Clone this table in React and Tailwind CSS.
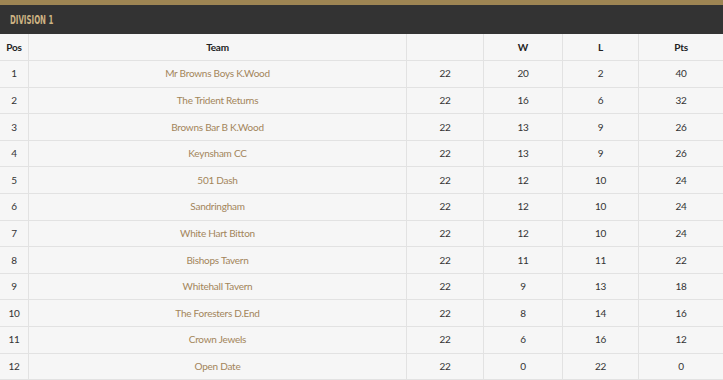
const rows = [
  [1, "Mr Browns Boys K.Wood", 22, 20, 2, 40],
  [2, "The Trident Returns", 22, 16, 6, 32],
  [3, "Browns Bar B K.Wood", 22, 13, 9, 26],
  [4, "Keynsham CC", 22, 13, 9, 26],
  [5, "501 Dash", 22, 12, 10, 24],
  [6, "Sandringham", 22, 12, 10, 24],
  [7, "White Hart Bitton", 22, 12, 10, 24],
  [8, "Bishops Tavern", 22, 11, 11, 22],
  [9, "Whitehall Tavern", 22, 9, 13, 18],
  [10, "The Foresters D.End", 22, 8, 14, 16],
  [11, "Crown Jewels", 22, 6, 16, 12],
  [12, "Open Date", 22, 0, 22, 0],
];

const cell = "h-[26.6px] border border-[#e2e2e2] text-center p-0";

export default function App() {
  return (
    <div className="w-[723px] h-[380px] overflow-hidden bg-[#f6f6f6] font-['Lato',sans-serif] text-[10px] tracking-[-0.25px]">
      <div className="h-[5px] bg-[#9e8553]" />
      <div className="h-[29px] bg-[#333333] flex items-center px-[10px]">
        <span className="inline-block origin-left scale-x-[0.6] font-['DejaVu_Sans_Condensed',sans-serif] font-bold text-[13px] text-[#cdb383] tracking-normal">
          DIVISION 1
        </span>
      </div>
      <table className="w-[724px] border-collapse table-fixed -ml-px">
        <colgroup>
          <col className="w-[29px]" />
          <col className="w-[378px]" />
          <col className="w-[77px]" />
          <col className="w-[79px]" />
          <col className="w-[76px]" />
          <col className="w-[85px]" />
        </colgroup>
        <thead>
          <tr className="text-[#222]">
            <th className={`${cell} border-t-0 font-bold`}>Pos</th>
            <th className={`${cell} border-t-0 font-bold`}>Team</th>
            <th className={`${cell} border-t-0`}></th>
            <th className={`${cell} border-t-0 font-bold`}>W</th>
            <th className={`${cell} border-t-0 font-bold`}>L</th>
            <th className={`${cell} border-t-0 font-bold`}>Pts</th>
          </tr>
        </thead>
        <tbody>
          {rows.map((r) => (
            <tr key={r[0]} className="text-[#333]">
              <td className={cell}>{r[0]}</td>
              <td className={`${cell} text-[#a3855a]`}>{r[1]}</td>
              <td className={cell}>{r[2]}</td>
              <td className={cell}>{r[3]}</td>
              <td className={cell}>{r[4]}</td>
              <td className={cell}>{r[5]}</td>
            </tr>
          ))}
        </tbody>
      </table>
    </div>
  );
}
